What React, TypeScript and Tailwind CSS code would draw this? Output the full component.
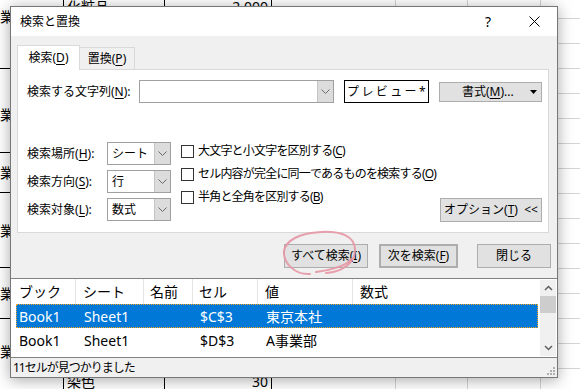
import React from 'react'

// アクセスキー（下線つき文字）
function K({ c }: { c: string }) {
  return <span className="underline underline-offset-[2px]">{c}</span>
}

function Chevron() {
  return (
    <svg width="9" height="6" viewBox="0 0 9 6">
      <path d="M0.5 0.5 L4.5 4.5 L8.5 0.5" fill="none" stroke="#6a6a6a" strokeWidth="1" />
    </svg>
  )
}

function DropBox({ value, w }: { value: string; w: string }) {
  return (
    <div className={`flex h-[23px] shrink-0 ${w} border border-[#a0a0a0] bg-white`}>
      <div className="flex-1 flex items-center pl-[4px] text-[12px]">{value}</div>
      <div className="w-[16px] flex items-center justify-center bg-[#dcdcdc] border-l border-[#c4c4c4]">
        <Chevron />
      </div>
    </div>
  )
}

const btn = 'flex items-center justify-center h-[24px] shrink-0 whitespace-nowrap bg-[#e1e1e1] border border-[#adadad] text-[12px]'

// 背景のシート
const colA = [
  { h: 'h-[75px]', t: 'items-start pt-[12px]' },
  { h: 'h-[84px]', t: 'items-center pt-[8px]' },
  { h: 'h-[40px]', t: 'items-center' },
  { h: 'h-[75px]', t: 'items-center' },
  { h: 'h-[51px]', t: 'items-center' },
  { h: 'h-[80px]', t: 'items-start pt-[22px]' },
]
const rows = Array.from({ length: 16 }, (_, i) => i)

function SheetCol({ w, dark, texts, right }: { w: string; dark?: boolean; texts?: Record<number, string>; right?: boolean }) {
  return (
    <div className={`${w} shrink-0 flex flex-col border-r ${dark ? 'border-black' : 'border-[#d4d4d4]'}`}>
      {rows.map((r) => (
        <div
          key={r}
          className={`h-[25px] shrink-0 flex items-center border-b ${dark ? 'border-black' : 'border-[#d4d4d4]'} ${right ? 'justify-end pr-[3px]' : 'pl-[3px]'} text-[14px]`}
        >
          {texts?.[r]}
        </div>
      ))}
    </div>
  )
}

export default function App() {
  return (
    <div className="relative w-[580px] h-[389px] overflow-hidden bg-white text-black font-['Noto_Sans','Noto_Sans_CJK_JP',sans-serif]">
      {/* シート */}
      <div className="flex -mt-[6px] h-[395px]">
        <div className="w-[88px] -ml-[24px] shrink-0 flex flex-col border-r border-black">
          {colA.map((c, i) => (
            <div key={i} className={`${c.h} shrink-0 flex ${c.t} border-b border-black pl-[1px] text-[14px]`}>
              A事業部
            </div>
          ))}
        </div>
        <SheetCol w="w-[101px]" dark texts={{ 0: '化粧品', 15: '染色' }} />
        <SheetCol w="w-[107px]" dark right texts={{ 0: '2,000', 15: '30' }} />
        <SheetCol w="w-[124px]" />
        <SheetCol w="w-[72px]" />
        <SheetCol w="w-[73px]" />
        <SheetCol w="w-[100px]" />
      </div>

      {/* ダイアログ */}
      <div className="absolute left-[10px] top-[6px] w-[548px] h-[372px] flex flex-col border border-[#777] bg-white shadow-[0_2px_14px_rgba(0,0,0,0.35)] whitespace-nowrap">
        <div className="h-[29px] shrink-0 flex items-center">
          <div className="flex-1 pl-[9px] text-[12px]">検索と置換</div>
          <div className="w-[46px] h-full flex items-center justify-center text-[14px]">?</div>
          <div className="w-[46px] h-full flex items-center justify-center">
            <svg width="11" height="11" viewBox="0 0 11 11">
              <path d="M0.5 0.5 L10.5 10.5 M10.5 0.5 L0.5 10.5" stroke="#000" strokeWidth="1" />
            </svg>
          </div>
        </div>

        <div className="flex-1 flex flex-col bg-[#f0f0f0] pt-[9px]">
          {/* タブ */}
          <div className="pl-[6px] pr-[8px]">
            <div className="flex items-end">
              <div className="relative z-10 -mb-px h-[25px] w-[63px] flex items-center justify-center bg-white border-x border-t border-[#d9d9d9] text-[12px]">
                検索(<K c="D" />)
              </div>
              <div className="h-[22px] w-[55px] flex items-center justify-center border-r border-t border-[#d9d9d9] text-[12px]">
                置換(<K c="P" />)
              </div>
            </div>
            <div className="h-[164px] border border-[#d9d9d9] bg-white pl-[9px] pr-[6px] pt-[10px]">
              <div className="flex items-center h-[23px] text-[12px]">
                <div className="w-[112px] shrink-0">
                  検索する文字列(<K c="N" />):
                </div>
                <DropBox value="" w="w-[195px]" />
                <div className="ml-[10px] w-[85px] h-[23px] shrink-0 flex items-center border border-black pl-[2px] text-[12px] tracking-[2.4px]">
                  プレビュー*
                </div>
                <div className="ml-[10px] w-[103px] h-[20px] shrink-0 flex items-center bg-[#e1e1e1] border border-[#adadad] pl-[22px] pr-[4px]">
                  <span className="flex-1">
                    書式(<K c="M" />)...
                  </span>
                  <svg width="7" height="4" viewBox="0 0 7 4">
                    <path d="M0 0 L7 0 L3.5 4 Z" fill="#000" />
                  </svg>
                </div>
              </div>

              <div className="flex items-start h-[81px] mt-[38px] text-[12px]">
                <div className="flex flex-col gap-[5px] mt-[1px] shrink-0">
                  {[
                    ['検索場所', 'H', 'シート'],
                    ['検索方向', 'S', '行'],
                    ['検索対象', 'L', '数式'],
                  ].map(([l, k, v]) => (
                    <div key={k} className="flex items-center h-[23px]">
                      <div className="w-[80px] shrink-0">
                        {l}(<K c={k} />):
                      </div>
                      <DropBox value={v} w="w-[64px]" />
                    </div>
                  ))}
                </div>
                <div className="flex flex-col gap-[3px] ml-[10px] shrink-0">
                  {[
                    ['大文字と小文字を区別する', 'C'],
                    ['セル内容が完全に同一であるものを検索する', 'O'],
                    ['半角と全角を区別する', 'B'],
                  ].map(([l, k]) => (
                    <div key={k} className="flex items-center h-[20px] tracking-[-0.8px]">
                      <div className="w-[13px] h-[13px] shrink-0 border border-[#333] bg-white mr-[4px]" />
                      <span>
                        {l}(<K c={k} />)
                      </span>
                    </div>
                  ))}
                </div>
                <div className={`${btn} ml-auto self-end w-[102px]`}>
                  オプション(<K c="T" />)&nbsp;&nbsp;&lt;&lt;
                </div>
              </div>
            </div>
          </div>

          {/* ボタン */}
          <div className="flex justify-end pr-[6px] mt-[11px]">
            <div className={`${btn} w-[84px]`}>
              すべて検索(<K c="I" />)
            </div>
            <div className={`${btn} w-[79px] ml-[11px] border-2 border-[#0078d7]`}>
              次を検索(<K c="F" />)
            </div>
            <div className={`${btn} w-[74px] ml-[19px]`}>閉じる</div>
          </div>

          {/* 結果一覧 */}
          <div className="flex-1 mt-[10px] flex border-y border-[#828282] bg-white text-[14px]">
            <div className="flex-1 pl-[5px] pr-[2px]">
              <div className="flex h-[25px] items-center">
                <div className="w-[60px] pl-[3px] border-r border-[#e5e5e5] h-full flex items-center">ブック</div>
                <div className="w-[68px] pl-[7px] border-r border-[#e5e5e5] h-full flex items-center">シート</div>
                <div className="w-[49px] pl-[6px] border-r border-[#e5e5e5] h-full flex items-center">名前</div>
                <div className="w-[65px] pl-[6px] border-r border-[#e5e5e5] h-full flex items-center">セル</div>
                <div className="w-[95px] pl-[7px] border-r border-[#e5e5e5] h-full flex items-center">値</div>
                <div className="flex-1 pl-[7px] h-full flex items-center">数式</div>
              </div>
              {[
                ['Book1', 'Sheet1', '', '$C$3', '東京本社', true],
                ['Book1', 'Sheet1', '', '$D$3', 'A事業部', false],
              ].map(([b, s, n, c, v, sel], i) => (
                <div
                  key={i}
                  className={`flex h-[24px] items-center ${sel ? 'bg-[#0078d7] text-white border border-dotted border-[#f5a623]' : 'border border-transparent'}`}
                >
                  <div className="w-[60px] pl-[2px]">{b}</div>
                  <div className="w-[68px] pl-[7px]">{s}</div>
                  <div className="w-[49px] pl-[6px]">{n}</div>
                  <div className="w-[65px] pl-[6px]">{c}</div>
                  <div className="w-[95px] pl-[7px]">{v}</div>
                  <div className="flex-1" />
                </div>
              ))}
            </div>
            <div className="w-[16px] my-[1px] mr-[1px] bg-[#f0f0f0] flex flex-col items-center">
              <div className="h-[16px] flex items-center justify-center">
                <svg width="9" height="6" viewBox="0 0 9 6">
                  <path d="M1 5 L4.5 1.5 L8 5" fill="none" stroke="#606060" strokeWidth="1.5" />
                </svg>
              </div>
              <div className="w-full h-[17px] bg-[#cdcdcd]" />
              <div className="flex-1" />
              <div className="h-[16px] flex items-center justify-center">
                <svg width="9" height="6" viewBox="0 0 9 6">
                  <path d="M1 1 L4.5 4.5 L8 1" fill="none" stroke="#606060" strokeWidth="1.5" />
                </svg>
              </div>
            </div>
          </div>

          {/* ステータス */}
          <div className="h-[19px] shrink-0 flex items-center pl-[2px] pr-[2px] text-[12px] tracking-[-1px]">
            <span className="flex-1">11セルが見つかりました</span>
            <svg width="9" height="9" viewBox="0 0 9 9" className="self-end mb-[2px]">
              <g fill="#b0b0b0">
                <rect x="7" y="1" width="2" height="2" />
                <rect x="4" y="4" width="2" height="2" />
                <rect x="7" y="4" width="2" height="2" />
                <rect x="1" y="7" width="2" height="2" />
                <rect x="4" y="7" width="2" height="2" />
                <rect x="7" y="7" width="2" height="2" />
              </g>
            </svg>
          </div>
        </div>
      </div>

      {/* 手書きの丸印 */}
      <svg className="absolute left-0 top-0 pointer-events-none" width="580" height="389">
        <path
          d="M326 273 C342 272 355 263 355 250 C355 236 341 231 321 232 C300 233 286 240 284 251 C283 263 295 275 310 274 M316 272 C330 270 346 267 351 259"
          fill="none"
          stroke="#e596a3"
          strokeWidth="2"
          strokeLinecap="round"
          opacity="0.9"
        />
      </svg>
    </div>
  )
}
